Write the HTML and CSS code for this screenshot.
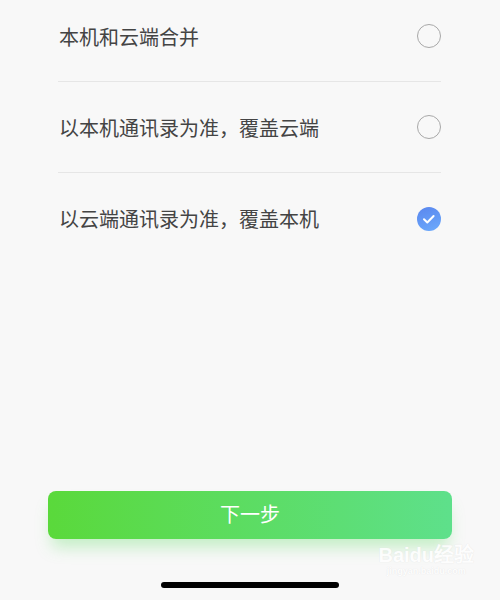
FILE: index.html
```html
<!DOCTYPE html>
<html lang="zh-CN">
<head>
    <meta charset="UTF-8">
    <meta name="viewport" content="width=device-width, initial-scale=1.0">
    <title>合并通讯录</title>
    <link rel="stylesheet" href="styles.css">
</head>
<body>
    <div id="page">
        <ul class="options">
            <li class="option">
                <span class="label">本机和云端合并</span>
                <span class="radio"></span>
            </li>
            <li class="option">
                <span class="label">以本机通讯录为准，覆盖云端</span>
                <span class="radio"></span>
            </li>
            <li class="option">
                <span class="label">以云端通讯录为准，覆盖本机</span>
                <span class="radio checked">
                    <svg width="24" height="24" viewBox="0 0 24 24">
                        <path d="M7 12.3l3.3 3.2 6.3-6.5" fill="none" stroke="#fff" stroke-width="2" stroke-linecap="round" stroke-linejoin="round"/>
                    </svg>
                </span>
            </li>
        </ul>
        <div class="spacer"></div>
        <button id="next">下一步</button>
        <div class="home-bar"></div>
        <div class="watermark">
            <div class="wm-logo">Baidu经验</div>
            <div class="wm-url">jingyan.baidu.com</div>
        </div>
    </div>
</body>
</html>
```

FILE: styles.css
```css
body {
    margin: 0;
    background-color: #f8f8f8;
    font-family: "Noto Sans CJK SC", "Noto Sans", sans-serif;
    color: #444;
}
#page {
    position: relative;
    height: 600px;
    display: flex;
    flex-direction: column;
    overflow: hidden;
}
.options {
    list-style: none;
    margin: -9px 59px 0 58px;
    padding: 0;
}
.option {
    height: 91px;
    display: flex;
    align-items: center;
    justify-content: space-between;
    border-bottom: 1px solid #e6e6e6;
    box-sizing: border-box;
}
.option:last-child {
    border-bottom: none;
}
.label {
    font-size: 20px;
    padding-left: 1px;
}
.radio {
    width: 24px;
    height: 24px;
    border: 1.5px solid #a8a8a8;
    border-radius: 50%;
    box-sizing: border-box;
}
.radio.checked {
    border: none;
    background: linear-gradient(160deg, #5a86ee, #6cabfc);
}
.radio svg {
    display: block;
}
.spacer {
    flex: 1;
}
#next {
    margin: 0 48px;
    height: 48px;
    padding: 0 0 3px;
    border: none;
    border-radius: 8px;
    background: linear-gradient(90deg, #5ad93b, #5ee08b);
    box-shadow: 0 12px 16px -4px rgba(94, 220, 100, 0.35);
    color: #fff;
    font-family: inherit;
    font-size: 20px;
    cursor: pointer;
}
.home-bar {
    width: 178px;
    height: 6px;
    border-radius: 3px;
    background-color: #000;
    margin: 43px auto 12px;
}
.watermark {
    position: absolute;
    right: 26px;
    bottom: 24px;
    color: #fff;
    text-shadow: 0 0 1px #ddd;
    text-align: center;
    font-family: "Liberation Sans", sans-serif;
    opacity: 0.85;
}
.wm-logo {
    font-size: 20px;
    font-weight: bold;
    line-height: 22px;
}
.wm-url {
    font-size: 9px;
    font-weight: bold;
}
```
